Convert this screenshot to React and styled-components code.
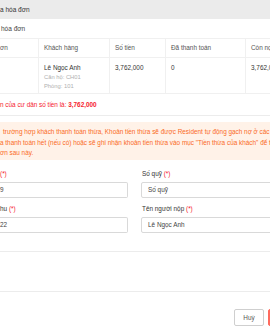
import React from 'react';
import styled, { createGlobalStyle, css } from 'styled-components';

const GlobalStyle = createGlobalStyle`
  html, body {
    margin: 0;
    padding: 0;
    background: #fff;
  }
  body {
    font-family: "Liberation Sans", Arial, sans-serif;
    color: #333;
    width: 270px;
    height: 330px;
    overflow: hidden;
  }
`;

const Frame = styled.div`
  width: 270px;
  height: 330px;
  overflow: hidden;
  display: flex;
  flex-direction: column;
`;

const TitleBar = styled.div`
  height: 19px;
  line-height: 19px;
  background: #ebebeb;
  font-size: 6.5px;
  color: #333;
  white-space: nowrap;
`;

const Caption = styled.div`
  height: 19px;
  line-height: 19px;
  font-size: 6.5px;
  color: #444;
  padding-left: 1px;
`;

const Table = styled.div`
  display: grid;
  grid-template-columns: 39px 71px 56px 80px 40px;
  width: 286px;
  border-top: 1px solid #f0f0f0;
`;

const HeadCell = styled.div`
  height: 18px;
  line-height: 18px;
  padding-left: ${({ $first }) => ($first ? '0' : '5px')};
  font-size: 6.4px;
  color: #555;
  border-right: 1px solid #f0f0f0;
  border-bottom: 1px solid #f0f0f0;
  white-space: nowrap;
  overflow: hidden;
`;

const Cell = styled.div`
  height: 30px;
  padding: 5px 0 0 ${({ $first }) => ($first ? '0' : '5px')};
  font-size: 6.4px;
  line-height: 9.5px;
  color: #333;
  border-right: 1px solid #f0f0f0;
  border-bottom: 1px solid #f0f0f0;
  white-space: nowrap;
  overflow: hidden;
`;

const SubLine = styled.div`
  color: #b0b0b0;
  font-size: 5.8px;
`;

const Notice = styled.div`
  height: 21px;
  line-height: 21px;
  font-size: 6.4px;
  color: #f5222d;
  white-space: nowrap;
  border-bottom: 1px solid #ececec;

  strong {
    font-weight: 700;
  }
`;

const Warning = styled.div`
  margin-top: 6px;
  padding: 5px 0 1px;
  background: #fff2e8;
  color: #fa6a1e;
  font-size: 6.4px;
  line-height: 10.5px;
`;

const WarnLine = styled.div`
  white-space: nowrap;
  overflow: hidden;
  padding-left: ${({ $indent }) => $indent || 0}px;
`;

const Form = styled.div`
  margin-top: 9px;
  display: grid;
  grid-template-columns: 128px 140px;
  column-gap: 13px;
  row-gap: 6px;
`;

const Field = styled.div`
  display: flex;
  flex-direction: column;
`;

const Label = styled.div`
  height: 10px;
  line-height: 10px;
  font-size: 6.4px;
  color: #333;
  white-space: nowrap;
  padding-left: ${({ $clip }) => ($clip ? '0' : '1px')};
`;

const Req = styled.span`
  color: #f5222d;
`;

const Input = styled.div`
  margin-top: 3px;
  height: 14px;
  line-height: 14px;
  border: 1px solid #d9d9d9;
  border-radius: 2px;
  padding-left: 6px;
  font-size: 6.4px;
  color: #444;
  white-space: nowrap;

  ${({ $clip }) => $clip && css`
    border-left: none;
    border-radius: 0 2px 2px 0;
    padding-left: 0;
  `}
`;

const Divider = styled.div`
  margin-top: 18px;
  border-top: 1px solid #ececec;
  height: 39px;
`;

const Footer = styled.div`
  border-top: 1px solid #ececec;
  margin-right: -40px;
  padding: 17px 4px 0 0;
  display: flex;
  justify-content: flex-end;
  gap: 4px;
`;

const Button = styled.div`
  height: 15px;
  line-height: 15px;
  width: ${({ $primary }) => ($primary ? '36px' : '28px')};
  text-align: center;
  font-size: 6.4px;
  border-radius: 2px;
  ${({ $primary }) => ($primary ?
    css`
      background: #ff6b5e;
      border: 1px solid #ff6b5e;
      color: #fff;
    ` :
    css`
      background: #fff;
      border: 1px solid #cfcfcf;
      color: #555;
    `)}
`;

const App = () => (
  <>
    <GlobalStyle />
    <Frame>
      <TitleBar>a hóa đơn</TitleBar>
      <Caption>hóa đơn</Caption>
      <Table>
        <HeadCell $first>ơn</HeadCell>
        <HeadCell>Khách hàng</HeadCell>
        <HeadCell>Số tiền</HeadCell>
        <HeadCell>Đã thanh toán</HeadCell>
        <HeadCell>Còn nợ</HeadCell>
        <Cell $first />
        <Cell>
          Lê Ngọc Anh
          <SubLine>Căn hộ: CH01</SubLine>
          <SubLine>Phòng: 101</SubLine>
        </Cell>
        <Cell>3,762,000</Cell>
        <Cell>0</Cell>
        <Cell>3,762,000</Cell>
      </Table>
      <Notice>
        n của cư dân số tiền là: <strong>3,762,000</strong>
      </Notice>
      <Warning>
        <WarnLine $indent={3}>trường hợp khách thanh toán thừa, Khoản tiền thừa sẽ được Resident tự động gạch nợ ở các hóa đơn</WarnLine>
        <WarnLine>a thanh toán hết (nếu có) hoặc sẽ ghi nhận khoản tiền thừa vào mục "Tiền thừa của khách" để trừ vào</WarnLine>
        <WarnLine>ơn sau này.</WarnLine>
      </Warning>
      <Form>
        <Field>
          <Label $clip><Req>(*)</Req></Label>
          <Input $clip>9</Input>
        </Field>
        <Field>
          <Label>Số quỹ <Req>(*)</Req></Label>
          <Input>Số quỹ</Input>
        </Field>
        <Field>
          <Label $clip>hu <Req>(*)</Req></Label>
          <Input $clip>22</Input>
        </Field>
        <Field>
          <Label>Tên người nộp <Req>(*)</Req></Label>
          <Input>Lê Ngọc Anh</Input>
        </Field>
      </Form>
      <Divider />
      <Footer>
        <Button>Huỷ</Button>
        <Button $primary>Lưu</Button>
      </Footer>
    </Frame>
  </>
);

export default App;
